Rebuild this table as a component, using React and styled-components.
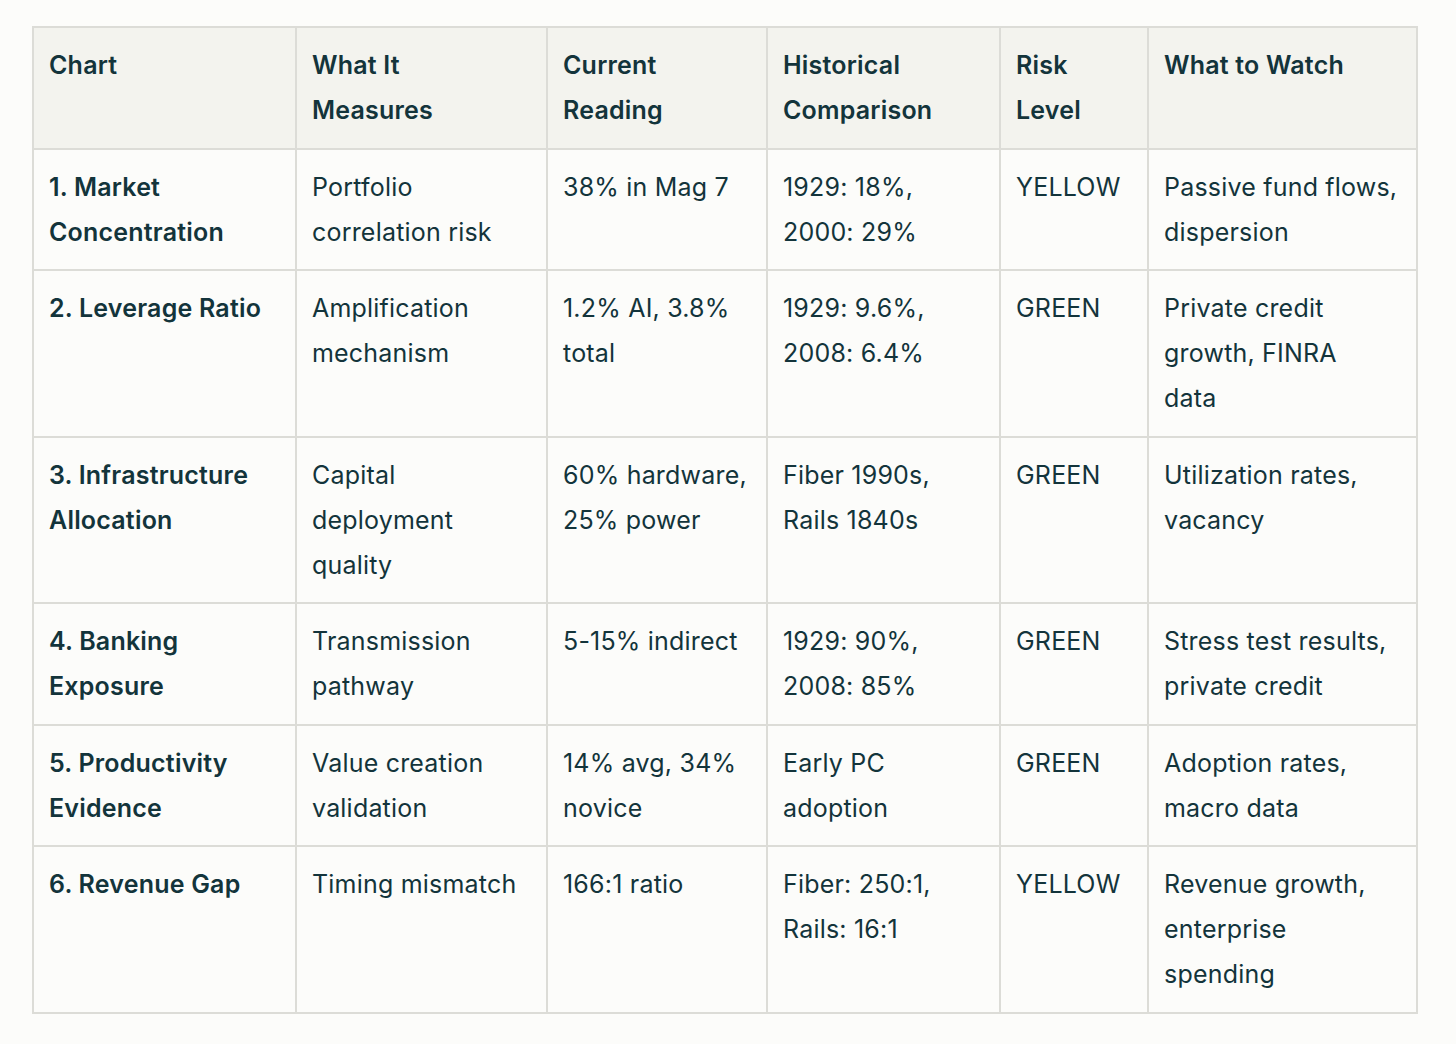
import React from 'react';
import styled, { createGlobalStyle } from 'styled-components';

const GlobalStyle = createGlobalStyle`
  body {
    margin: 0;
    background: #fcfcfa;
    font-family: Inter, "Liberation Sans", sans-serif;
    color: #13343b;
  }
`

const Page = styled.div`
  padding: 26px 40px 30px 32px;
`

const Table = styled.table`
  border-collapse: collapse;
  table-layout: fixed;
  width: 1384px;
  font-size: 25px;
  letter-spacing: 0.2px;
  line-height: 45px;
  border: 2px solid #dcdcd7;
`

const HeadCell = styled.th`
  background: #f3f3ee;
  text-align: left;
  vertical-align: top;
  font-weight: 600;
  white-space: pre-line;
  padding: 15px 8px 14.5px 15px;
  border: 2px solid #dcdcd7;
`

const Cell = styled.td`
  vertical-align: top;
  white-space: pre-line;
  padding: 15px 8px 14.5px 15px;
  border: 2px solid #dcdcd7;
  font-weight: ${p => (p.$bold ? 600 : 400)};
`

const columns = [
  { title: 'Chart', width: 263 },
  { title: 'What It\nMeasures', width: 251 },
  { title: 'Current\nReading', width: 220 },
  { title: 'Historical\nComparison', width: 233 },
  { title: 'Risk\nLevel', width: 148 },
  { title: 'What to Watch', width: 269 },
];

const rows = [
  ['1. Market\nConcentration', 'Portfolio\ncorrelation risk', '38% in Mag 7', '1929: 18%,\n2000: 29%', 'YELLOW', 'Passive fund flows,\ndispersion'],
  ['2. Leverage Ratio', 'Amplification\nmechanism', '1.2% AI, 3.8%\ntotal', '1929: 9.6%,\n2008: 6.4%', 'GREEN', 'Private credit\ngrowth, FINRA\ndata'],
  ['3. Infrastructure\nAllocation', 'Capital\ndeployment\nquality', '60% hardware,\n25% power', 'Fiber 1990s,\nRails 1840s', 'GREEN', 'Utilization rates,\nvacancy'],
  ['4. Banking\nExposure', 'Transmission\npathway', '5-15% indirect', '1929: 90%,\n2008: 85%', 'GREEN', 'Stress test results,\nprivate credit'],
  ['5. Productivity\nEvidence', 'Value creation\nvalidation', '14% avg, 34%\nnovice', 'Early PC\nadoption', 'GREEN', 'Adoption rates,\nmacro data'],
  ['6. Revenue Gap', 'Timing mismatch', '166:1 ratio', 'Fiber: 250:1,\nRails: 16:1', 'YELLOW', 'Revenue growth,\nenterprise\nspending'],
];

export default function App() {
  return (
    <Page>
      <GlobalStyle />
      <Table>
        <colgroup>
          {columns.map(c => <col key={c.title} style={{ width: c.width }} />)}
        </colgroup>
        <thead>
          <tr>
            {columns.map(c => <HeadCell key={c.title}>{c.title}</HeadCell>)}
          </tr>
        </thead>
        <tbody>
          {rows.map(r => (
            <tr key={r[0]}>
              {r.map((v, i) => <Cell key={i} $bold={i === 0}>{v}</Cell>)}
            </tr>
          ))}
        </tbody>
      </Table>
    </Page>
  );
}
